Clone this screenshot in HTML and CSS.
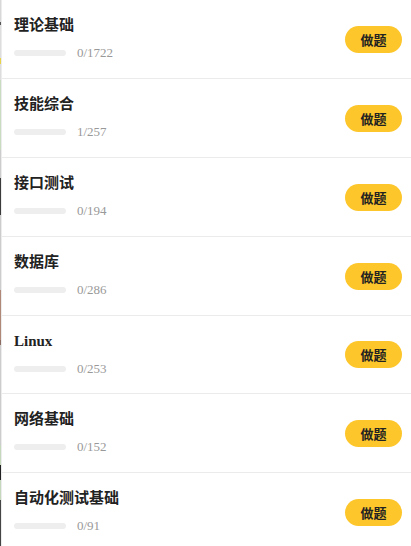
FILE: index.html
```html
<!DOCTYPE html>
<html lang="zh-CN">
<head>
  <meta charset="UTF-8">
  <title>题库</title>
  <link rel="stylesheet" href="styles.css">
</head>
<body>
  <div class="page">
    <div class="edge"></div>
    <ul class="list">
      <li class="item">
        <div class="info">
          <div class="title">理论基础</div>
          <div class="progress"><span class="bar"></span><span class="count">0/1722</span></div>
        </div>
        <button class="btn">做题</button>
      </li>
      <li class="item">
        <div class="info">
          <div class="title">技能综合</div>
          <div class="progress"><span class="bar"></span><span class="count">1/257</span></div>
        </div>
        <button class="btn">做题</button>
      </li>
      <li class="item">
        <div class="info">
          <div class="title">接口测试</div>
          <div class="progress"><span class="bar"></span><span class="count">0/194</span></div>
        </div>
        <button class="btn">做题</button>
      </li>
      <li class="item">
        <div class="info">
          <div class="title">数据库</div>
          <div class="progress"><span class="bar"></span><span class="count">0/286</span></div>
        </div>
        <button class="btn">做题</button>
      </li>
      <li class="item item-short">
        <div class="info">
          <div class="title">Linux</div>
          <div class="progress"><span class="bar"></span><span class="count">0/253</span></div>
        </div>
        <button class="btn">做题</button>
      </li>
      <li class="item">
        <div class="info">
          <div class="title">网络基础</div>
          <div class="progress"><span class="bar"></span><span class="count">0/152</span></div>
        </div>
        <button class="btn">做题</button>
      </li>
      <li class="item">
        <div class="info">
          <div class="title">自动化测试基础</div>
          <div class="progress"><span class="bar"></span><span class="count">0/91</span></div>
        </div>
        <button class="btn">做题</button>
      </li>
    </ul>
  </div>
</body>
</html>
```

FILE: styles.css
```css
body {
  margin: 0;
  background: #fff;
  font-family: "Liberation Serif", "Noto Sans CJK SC", serif;
  color: #222;
  overflow: hidden;
}
.page {
  display: flex;
  height: 546px;
}
/* sliver of the page underneath the drawer */
.edge {
  width: 1px;
  flex-shrink: 0;
  background: linear-gradient(#d8d8d8 0, #d8d8d8 22px, #555 22px, #555 25px, #ddd 25px, #ddd 58px, #e6d34a 58px, #e6d34a 64px, #ddd 64px, #ddd 80px,
    #c9dcc0 80px, #c9dcc0 150px, #ccc 150px, #ccc 178px, #3a3a3a 178px, #3a3a3a 215px, #ccc 215px, #ccc 290px,
    #b08878 290px, #b08878 340px, #8a6d60 340px, #8a6d60 345px, #ccc 345px, #ccc 445px, #c5d8bc 445px, #c5d8bc 465px,
    #222 465px, #222 480px, #c5d8bc 480px, #c5d8bc 500px, #444 500px, #444 546px);
}
.list {
  flex: 1;
  list-style: none;
  margin: 0;
  padding: 0;
  border-left: 1px solid #ececec;
}
.item {
  display: flex;
  align-items: center;
  justify-content: space-between;
  height: 79px;
  box-sizing: border-box;
  padding: 0 9px 0 12px;
  border-bottom: 1px solid #ebebeb;
}
.item-short {
  height: 78px;
}
.info {
  display: flex;
  flex-direction: column;
  gap: 10px;
  padding-bottom: 2px;
}
.title {
  font-size: 15px;
  font-weight: bold;
  line-height: 20px;
  color: #222;
}
.progress {
  display: flex;
  align-items: center;
  gap: 11px;
  height: 16px;
}
.bar {
  width: 52px;
  height: 6px;
  border-radius: 3px;
  background: #eee;
}
.count {
  font-size: 13px;
  color: #999;
}
.btn {
  width: 57px;
  height: 27px;
  border: none;
  border-radius: 14px;
  background: #fdc62a;
  color: #222;
  font-family: "Noto Sans CJK SC", sans-serif;
  font-size: 13px;
  font-weight: bold;
  padding: 0;
  cursor: pointer;
}
```
